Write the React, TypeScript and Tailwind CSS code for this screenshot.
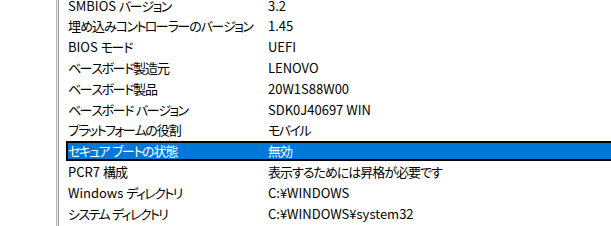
const rows: { label: string; value: string; selected?: boolean }[] = [
  { label: 'SMBIOS バージョン', value: '3.2' },
  { label: '埋め込みコントローラーのバージョン', value: '1.45' },
  { label: 'BIOS モード', value: 'UEFI' },
  { label: 'ベースボード製造元', value: 'LENOVO' },
  { label: 'ベースボード製品', value: '20W1S88W00' },
  { label: 'ベースボード バージョン', value: 'SDK0J40697 WIN' },
  { label: 'プラットフォームの役割', value: 'モバイル' },
  { label: 'セキュア ブートの状態', value: '無効', selected: true },
  { label: 'PCR7 構成', value: '表示するためには昇格が必要です' },
  { label: 'Windows ディレクトリ', value: 'C:¥WINDOWS' },
  { label: 'システム ディレクトリ', value: 'C:¥WINDOWS¥system32' },
];

// Latin runs keep normal spacing; kana/kanji get packed tighter, katakana most (UI font kana are narrow)
function Txt({ text }: { text: string }) {
  const parts = text.split(/([\u0000-\u00ff]+|[\u30a1-\u30fa]+)/).filter(Boolean);
  return (
    <>
      {parts.map((p, i) => {
        if (/^[\u0000-\u00ff]+$/.test(p)) return <span key={i}>{p}</span>;
        if (/^[\u30a1-\u30fa]+$/.test(p))
          return (
            <span key={i} className="tracking-[-1.6px]">
              {p}
            </span>
          );
        return (
          <span key={i} className="tracking-[-1px]">
            {p}
          </span>
        );
      })}
    </>
  );
}

export default function App() {
  return (
    <div className="flex h-[226px] w-[611px] overflow-hidden bg-white font-['Noto_Sans_CJK_JP',sans-serif] text-[13px] text-black [font-feature-settings:'palt']">
      {/* splitter edge */}
      <div className="w-[56px] shrink-0" />
      <div className="w-px shrink-0 bg-[#b9b9b9]" />
      <div className="w-px shrink-0 bg-[#ececec]" />
      <div className="w-px shrink-0 bg-[#9a9a9a]" />

      <div className="ml-[7px] -mt-[5px] flex shrink-0 flex-col">
        {rows.map((row) => (
          <div
            key={row.label}
            className={`flex h-[20.8px] w-[620px] items-center border-2 ${
              row.selected ? 'border-black bg-[#0078d7] text-white' : 'border-transparent'
            }`}
          >
            <div className="w-[200px] shrink-0 whitespace-nowrap">
              <Txt text={row.label} />
            </div>
            <div className="whitespace-nowrap">
              <Txt text={row.value} />
            </div>
          </div>
        ))}
      </div>
    </div>
  );
}
